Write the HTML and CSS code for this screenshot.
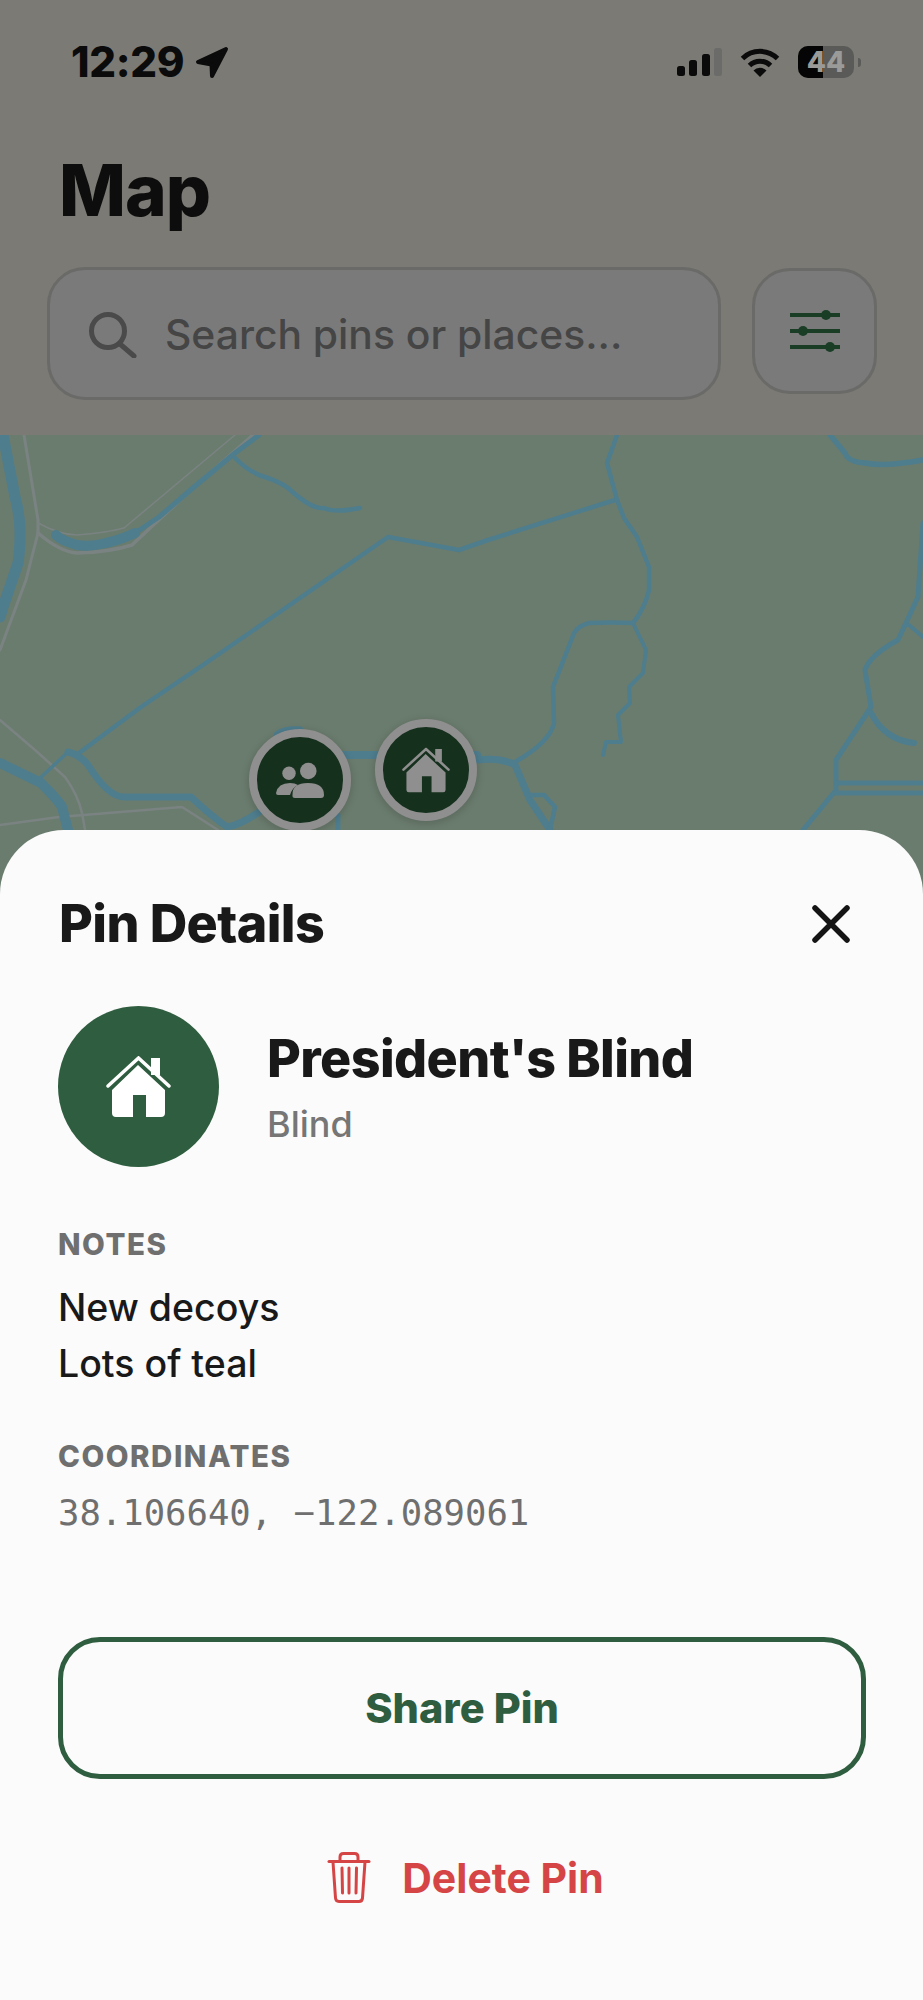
FILE: index.html
```html
<!DOCTYPE html>
<html lang="en">
<head>
  <meta charset="UTF-8">
  <meta name="viewport" content="width=device-width, initial-scale=1.0">
  <title>Map - Pin Details</title>
  <link rel="stylesheet" href="styles.css">
</head>
<body>
  <div class="screen">
    <div class="status">
      <div class="status-left">
        <span class="time">12:29</span>
        <svg class="arrow" viewBox="0 0 34 33"><path d="M31 3 3 16l13.500 2.500L17 30z" fill="#0b0b0b" stroke="#0b0b0b" stroke-width="4" stroke-linejoin="round"/></svg>
      </div>
      <div class="status-right">
        <div class="signal">
          <i class="bar b1"></i><i class="bar b2"></i><i class="bar b3"></i><i class="bar b4"></i>
        </div>
        <svg class="wifi" viewBox="0 0 40 30" fill="none" stroke="#0b0b0b" stroke-width="5">
          <path d="M2.500 11.500a25 25 0 0 1 35 0"/>
          <path d="M9.500 18.500a15 15 0 0 1 21 0"/>
          <path d="M20 30l-6.500-6.500a9 9 0 0 1 13 0z" fill="#0b0b0b" stroke="none"/>
        </svg>
        <div class="battery"><div class="battery-fill"></div><span class="battery-num">44</span></div>
        <div class="battery-nub"></div>
      </div>
    </div>

    <div class="header">
      <h1 class="page-title">Map</h1>
      <div class="search-row">
        <div class="search">
          <svg class="search-icon" viewBox="0 0 48 46" fill="none" stroke="#4a4a4a" stroke-width="5" stroke-linecap="round">
            <circle cx="19" cy="19" r="16.500"/>
            <path d="M31 32l14 12"/>
          </svg>
          <span class="placeholder">Search pins or places...</span>
        </div>
        <div class="filter">
          <svg class="filter-icon" viewBox="0 0 50 44" fill="#1a3d26" stroke="#1a3d26">
            <path d="M0 6h50M0 22h50M0 38h50" stroke-width="4" fill="none"/>
            <circle cx="36" cy="6" r="5" stroke="none"/>
            <circle cx="13" cy="22" r="5" stroke="none"/>
            <circle cx="40" cy="38" r="5" stroke="none"/>
          </svg>
        </div>
      </div>
    </div>

    <div class="map">
      <svg class="map-lines" viewBox="0 435 923 400" fill="none" stroke-linejoin="round" stroke-linecap="round">
        <g stroke="#7a8382">
          <path stroke-width="3" d="M24 435 38 520V533L26 580 0 650"/>
          <path stroke-width="3.500" d="M38 533 Q60 552 77 553 Q110 552 132 545 L194 487 253 435"/>
          <path stroke-width="1.500" d="M38 523 Q60 535 77 535 Q105 533 124 528 L235 435"/>
          <path stroke-width="2.500" d="M0 720 35 750 65 777 Q78 795 82 813 L85 830"/>
          <path stroke-width="2.500" d="M0 825 59 817 182 807 218 830"/>
        </g>
        <g stroke="#4e7d8e">
          <path stroke-width="11" d="M3 435 15 497 Q20 515 20 533 Q20 550 18 563 L3 607 0 617"/>
          <path stroke-width="5" d="M259 435 235 453 194 487 159 517 135 533"/>
          <path stroke-width="10" d="M135 533 Q120 540 106 543 Q90 547 77 545 Q62 541 56 535"/>
          <path stroke-width="4.500" d="M235 458 Q250 473 265 477 Q280 482 288 488 Q312 510 324 508 Q335 513 360 508"/>
          <path stroke-width="4.500" d="M79 753 141 707 203 665 271 618 388 537 459 550 488 540 615 500"/>
          <path stroke-width="4.500" d="M617 435 607 463 617 500 624 518 637 537 649 567 649 590 Q645 608 633 623"/>
          <path stroke-width="4.500" d="M633 623 Q610 622 589 623 Q578 626 574 633 L553 687 554 723 Q550 742 515 762"/>
          <path stroke-width="4" d="M633 623 646 650 643 673 629 687 630 703 618 715 621 742 606 742 603 755"/>
          <path stroke-width="10" d="M0 763 41 783 Q58 800 62 807 L68 830"/>
          <path stroke-width="3.500" d="M68 752 38 780"/>
          <path stroke-width="7" d="M68 752 Q80 755 88 765 Q108 797 124 797 L171 797 191 797 Q210 815 227 827 Q240 825 259 812"/>
          <path stroke-width="7" d="M277 735 Q284 729 300 730"/>
          <path stroke-width="8" d="M340 755H477"/>
          <path stroke-width="7" d="M477 760 Q500 757 515 765 L530 800 550 830"/>
          <path stroke-width="4.500" d="M530 795 544 795 555 807 550 830"/>
          <path stroke-width="5" d="M338 815V830"/>
          <path stroke-width="5" d="M923 523 918 597 898 640 Q870 655 865 670 L871 707 836 760 836 790 803 830"/>
          <path stroke-width="6" d="M871 713 Q885 740 914 743"/>
          <path stroke-width="4" d="M909 625 923 637"/>
          <path stroke-width="5" d="M836 783H923M836 793H923"/>
          <path stroke-width="5.500" d="M830 435 845 453 Q848 462 865 463 Q885 467 923 460"/>
        </g>
      </svg>
      <div class="marker marker-people">
        <svg class="people-icon" viewBox="0 0 48 36" fill="#908f8f">
          <circle cx="32.300" cy="9" r="8.300"/>
          <circle cx="13" cy="11.300" r="6.700"/>
          <path d="M0 31Q2 21 14 21 19 21 22 23 16 26 14 33H2Q0 33 0 31Z"/>
          <path d="M16.500 33Q16 21 32 21 48 21 48 33 48 36 45 36H19Q16 36 16.500 33Z"/>
        </svg>
      </div>
      <div class="marker marker-home">
        <svg class="home-icon" viewBox="0 0 65 61">
          <use href="#home" fill="#908f8f" stroke="#908f8f"/>
        </svg>
      </div>
    </div>

    <div class="sheet">
      <div class="sheet-head">
        <h2 class="sheet-title">Pin Details</h2>
        <svg class="close" viewBox="0 0 38 38" fill="none" stroke="#141414" stroke-width="5.500" stroke-linecap="round">
          <path d="M3 3l32 32M35 3 3 35"/>
        </svg>
      </div>

      <div class="pin-row">
        <div class="pin-avatar">
          <svg class="avatar-icon" viewBox="0 0 65 61">
            <symbol id="home" viewBox="0 0 65 61">
              <path d="M32 9 59 34V57q0 4-4 4H40V39H27V61H10q-4 0-4-4V34Z" stroke="none"/>
              <path d="M45 2h9v17H45z" stroke="none"/>
              <path d="M2 30 32.500 2 63 30" fill="none" stroke-width="3.500" stroke-linecap="round"/>
            </symbol>
            <use href="#home" fill="#fff" stroke="#fff"/>
          </svg>
        </div>
        <div class="pin-text">
          <div class="pin-name">President's Blind</div>
          <div class="pin-type">Blind</div>
        </div>
      </div>

      <div class="label notes-label">NOTES</div>
      <div class="notes">New decoys<br>Lots of teal</div>

      <div class="label coords-label">COORDINATES</div>
      <div class="coords">38.106640, −122.089061</div>

      <button class="share">Share Pin</button>

      <div class="delete">
        <svg class="trash" viewBox="0 0 44 53" fill="none" stroke="#d64545" stroke-width="3" stroke-linecap="round" stroke-linejoin="round">
          <path d="M2 10.500H42"/>
          <path d="M13 10V6q0-3.500 3.500-3.500H27.500q3.500 0 3.500 3.500V10"/>
          <path d="M6 11 8.500 47q.3 3.500 3.500 3.500H32q3.200 0 3.500-3.500L38 11"/>
          <path d="M15 17l.5 25M22 17V42M29.500 17 29 42"/>
        </svg>
        <span class="delete-text">Delete Pin</span>
      </div>
    </div>
  </div>
</body>
</html>
```

FILE: styles.css
```css
* { box-sizing: border-box; }
html, body { margin: 0; padding: 0; }
body { font-family: Inter, "Liberation Sans", sans-serif; background: #7b7a75; }

.screen { position: relative; width: 923px; height: 2000px; overflow: hidden; display: flex; flex-direction: column; background: #7b7a75; }

/* status bar */
.status { height: 100px; padding: 44px 62px 0 71px; display: flex; justify-content: space-between; align-items: flex-start; flex: none; }
.status-left { display: flex; align-items: center; gap: 11px; height: 36px; }
.time { font-size: 42px; font-weight: 800; line-height: 36px; letter-spacing: -.3px; color: #0b0b0b; }
.arrow { width: 34px; height: 33px; display: block; }
.status-right { display: flex; align-items: center; height: 36px; }
.signal { display: flex; align-items: flex-end; gap: 4.500px; height: 28px; margin-right: 18px; }
.bar { display: block; width: 8px; background: #0b0b0b; border-radius: 2.500px; }
.b1 { height: 10px; }
.b2 { height: 16px; }
.b3 { height: 22px; }
.b4 { height: 28px; background: #6b6b69; }
.wifi { width: 40px; height: 30px; display: block; margin-right: 18px; }
.battery { position: relative; width: 56px; height: 32px; border-radius: 10px; background: #5a5a58; overflow: hidden; }
.battery-fill { width: 25px; height: 32px; background: #050505; }
.battery-num { position: absolute; inset: 0; text-align: center; font-size: 28px; font-weight: 800; line-height: 32px; color: #9a9a98; }
.battery-nub { width: 3px; height: 9px; margin-left: 4px; border-radius: 0 3px 3px 0; background: #5a5a58; }

/* header */
.header { height: 335px; flex: none; padding: 0 46px 0 47px; }
.page-title { margin: 0; font-size: 71px; font-weight: 800; line-height: 84px; letter-spacing: -1px; color: #0d0d0d; padding: 0 0 0 12px; height: 167px; padding-top: 48px; box-sizing: border-box; }
.search-row { display: flex; gap: 31px; align-items: flex-start; }
.search { width: 674px; height: 133px; border: 3px solid #6a6a68; border-radius: 38px; background: #7a7a7a; display: flex; align-items: center; padding-left: 39px; gap: 28px; }
.search-icon { width: 48px; height: 46px; display: block; flex: none; margin-top: 2px; }
.placeholder { font-size: 40.800px; font-weight: 500; color: #454545; white-space: nowrap; }
.filter { width: 125px; height: 126px; margin-top: 1px; border: 3px solid #6a6a68; border-radius: 38px; background: #7a7a7a; display: flex; align-items: center; justify-content: center; }
.filter-icon { width: 50px; height: 44px; display: block; }

/* map */
.map { position: relative; flex: 1; background: #6a7c6e; }
.map-lines { display: block; width: 923px; height: 400px; }
.marker { position: absolute; width: 102px; height: 102px; border-radius: 50%; background: #16301e; border: 8.500px solid #908f8f; box-shadow: 0 2px 8px rgba(0, 0, 0, .18); display: flex; align-items: center; justify-content: center; }
.marker-people { left: 249px; top: 294px; }
.marker-home { left: 375px; top: 284px; }
.people-icon { width: 48px; height: 36px; display: block; }
.home-icon { width: 48px; height: 46px; display: block; }

/* bottom sheet */
.sheet { position: absolute; left: 0; right: 0; bottom: 0; height: 1170px; background: #fbfbfb; border-radius: 64px 64px 0 0; padding: 0 58px; display: flex; flex-direction: column; }
.sheet-head { display: flex; justify-content: space-between; align-items: center; height: 72px; margin-top: 58px; padding-right: 15px; }
.sheet-title { margin: 0 0 0 1px; font-size: 52px; font-weight: 800; letter-spacing: -.6px; line-height: 72px; color: #191919; }
.close { width: 38px; height: 38px; display: block; }

.pin-row { display: flex; align-items: center; margin-top: 45px; height: 162px; }
.pin-avatar { width: 161px; height: 161px; border-radius: 50%; background: #2f5d3f; display: flex; align-items: center; justify-content: center; flex: none; }
.avatar-icon { width: 65px; height: 61px; display: block; }
.pin-text { margin-left: 48px; margin-top: 2px; }
.pin-name { font-size: 52px; font-weight: 800; line-height: 60px; letter-spacing: -.6px; color: #191919; }
.pin-type { font-size: 36px; font-weight: 500; line-height: 44px; margin-top: 13px; color: #767676; }

.label { font-size: 29.500px; font-weight: 800; line-height: 34px; letter-spacing: 1.500px; color: #6f6f6f; }
.notes-label { margin-top: 60px; }
.notes { font-size: 37.500px; font-weight: 500; line-height: 56px; color: #191919; margin: 19px 0 0 0; }
.coords-label { margin-top: 47px; }
.coords { font-family: "DejaVu Sans Mono", "Liberation Mono", monospace; font-size: 35.600px; line-height: 44px; color: #6f6f6f; margin: 18px 0 0 0; }

.share { display: block; width: 808px; height: 142px; margin-top: 102px; border: 5.500px solid #2f5d3f; border-radius: 42px; background: transparent; font-family: inherit; font-size: 41.500px; font-weight: 800; color: #2f5d3f; }
.delete { display: flex; align-items: center; justify-content: center; gap: 31px; margin: 72px 0 0 8px; }
.trash { width: 44px; height: 53px; display: block; }
.delete-text { font-size: 41px; font-weight: 700; color: #d64545; }
```
